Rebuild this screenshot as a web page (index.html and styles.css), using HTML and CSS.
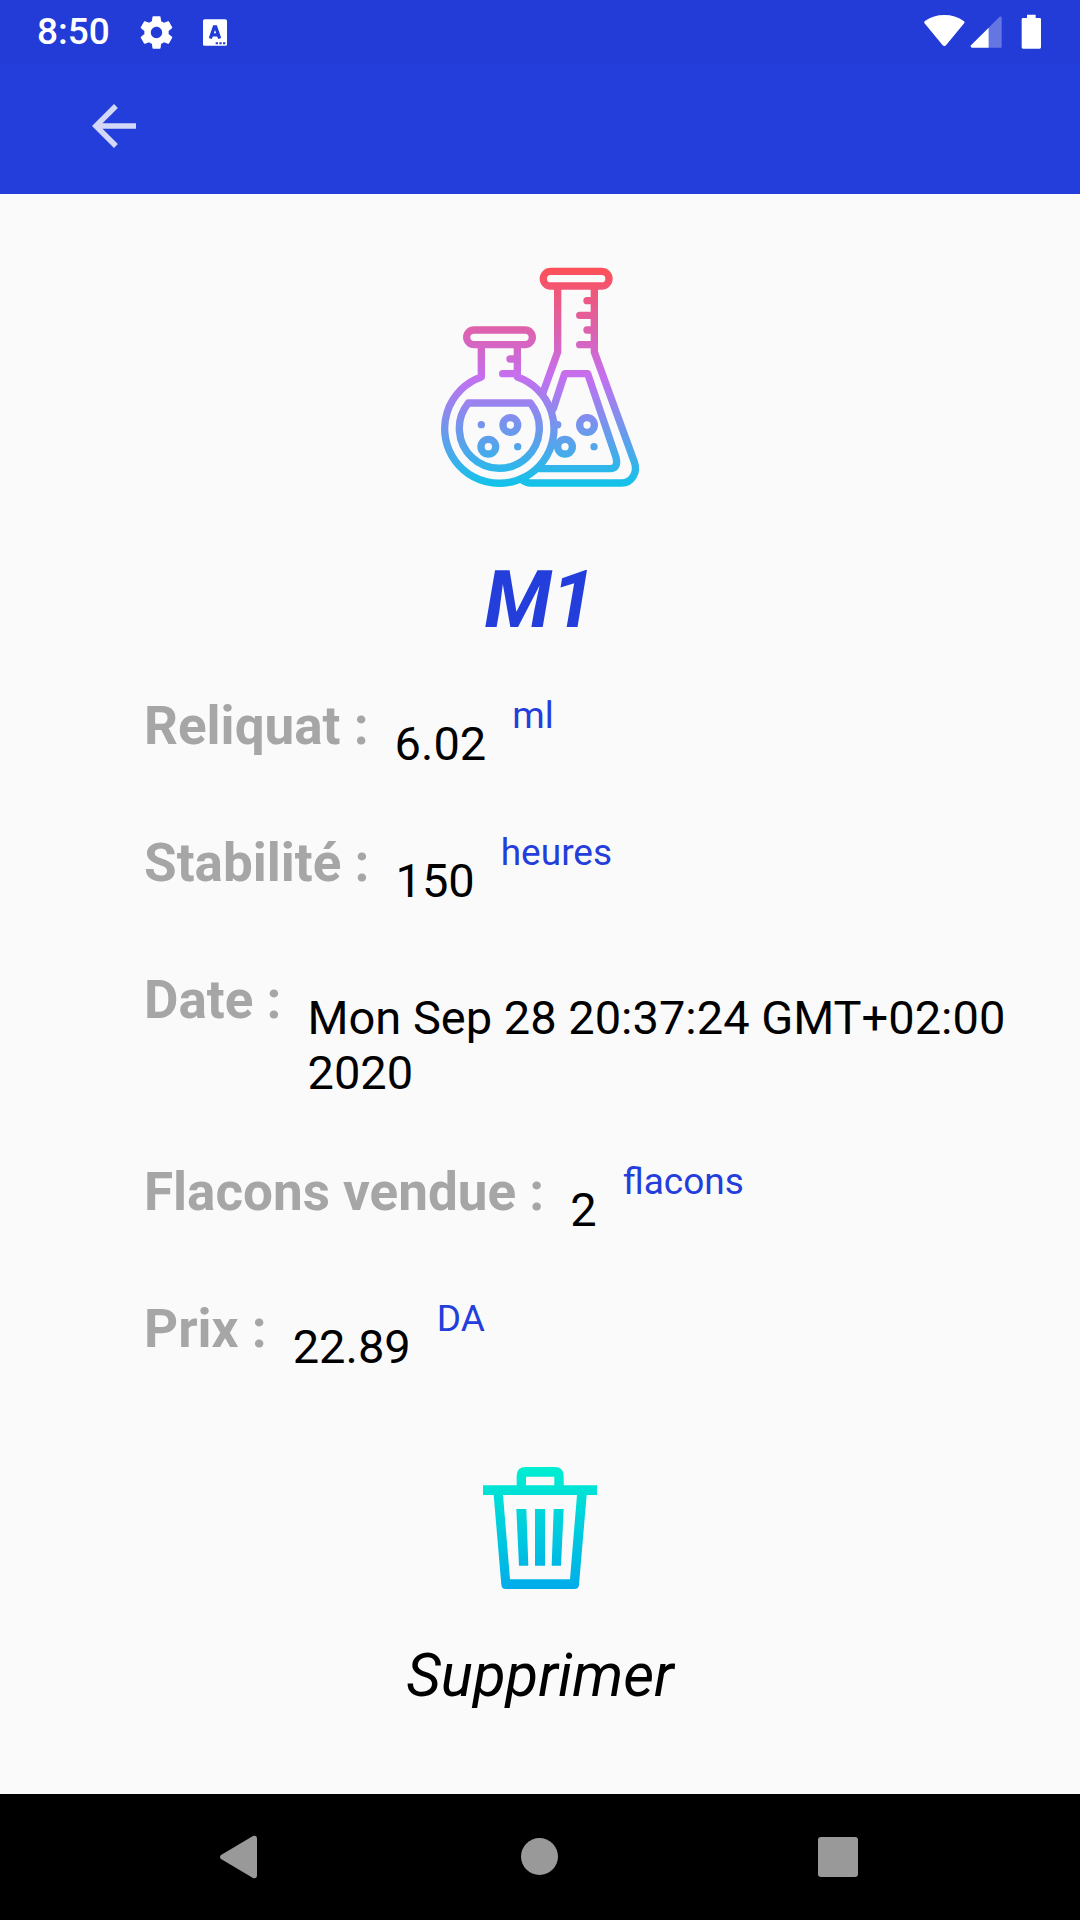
FILE: index.html
```html
<!DOCTYPE html>
<html lang="fr">
<head>
  <meta charset="utf-8">
  <meta name="viewport" content="width=device-width, initial-scale=1">
  <title>M1</title>
  <link rel="stylesheet" href="styles.css">
</head>
<body>
  <div class="status-bar">
    <span class="clock">8:50</span>
    <svg class="status-gear" viewBox="0 0 24 24" aria-hidden="true"><path d="M19.43 12.98c.04-.32.07-.64.07-.98s-.03-.66-.07-.98l2.11-1.65c.19-.15.24-.42.12-.64l-2-3.46c-.12-.22-.39-.3-.61-.22l-2.49 1c-.52-.4-1.08-.73-1.69-.98l-.38-2.65C14.46 2.18 14.25 2 14 2h-4c-.25 0-.46.18-.49.42l-.38 2.65c-.61.25-1.17.59-1.69.98l-2.49-1c-.23-.09-.49 0-.61.22l-2 3.46c-.13.22-.07.49.12.64l2.11 1.65c-.04.32-.07.65-.07.98s.03.66.07.98l-2.11 1.65c-.19.15-.24.42-.12.64l2 3.46c.12.22.39.3.61.22l2.49-1c.52.4 1.08.73 1.69.98l.38 2.65c.03.24.24.42.49.42h4c.25 0 .46-.18.49-.42l.38-2.65c.61-.25 1.17-.59 1.69-.98l2.49 1c.23.09.49 0 .61-.22l2-3.46c.12-.22.07-.49-.12-.64l-2.11-1.65zM12 15.500c-1.930 0-3.500-1.570-3.500-3.500s1.570-3.500 3.500-3.500 3.500 1.570 3.500 3.500-1.570 3.500-3.500 3.500z"/></svg>
    <svg class="status-app" viewBox="0 0 72 80" aria-hidden="true">
      <rect width="72" height="80" rx="5"/>
      <path class="status-app-mark" d="M22 58 L34 23 H38 L50 58 M27 47 H45"/>
      <path class="status-app-dots" d="M38 69h7v6h-7zM49 69h7v6h-7zM60 69h7v6h-7z"/>
    </svg>
    <svg class="status-system" viewBox="0 0 354 108" aria-hidden="true">
      <path d="M1 27 Q-1 23 4 20 Q28 3 61 3 T118 20 Q123 23 121 27 L66 94 Q61 99 56 94 Z"/>
      <path class="signal-empty" d="M194 41 L226 9 Q233 5 233 12 V101 H194 Z"/>
      <path d="M194 41 V101 H143 Q138 98 141 94 Z"/>
      <path d="M309 2 H335 V12 H347 Q351 12 351 16 V100 Q351 104 347 104 H297 Q293 104 293 100 V16 Q293 12 297 12 H309 Z"/>
    </svg>
  </div>

  <header class="app-bar">
    <button class="back" type="button" aria-label="Retour">
      <svg viewBox="0 0 24 24" aria-hidden="true"><path d="M20 11H7.830l5.590-5.590L12 4l-8 8 8 8 1.410-1.410L7.830 13H20z"/></svg>
    </button>
  </header>

  <main class="content">
    <svg class="flasks" viewBox="0 0 720 750" aria-hidden="true">
      <defs>
        <linearGradient id="flask-ink" gradientUnits="userSpaceOnUse" x1="0" y1="53" x2="0" y2="710">
          <stop offset="0" stop-color="#fd5056"/>
          <stop offset="50%" stop-color="#c56ff0"/>
          <stop offset="1" stop-color="#10c4e9"/>
        </linearGradient>
      </defs>
      <g class="flask-lines">
        <rect x="370" y="64" width="197" height="44" rx="22"/>
        <path d="M413 112 V306 L369 428"/>
        <path d="M523 112 V306 L643 636 C655 668 634 699 605 699 H332 Q318 699 304 688"/>
        <path d="M501 152 H523 M479 196 H523 M501 240 H523 M479 284 H523"/>
        <path d="M400 476 L434 371 H503 L588 622 Q596 656 570 656 H360"/>
        <circle cx="501" cy="525" r="22"/>
        <circle cx="435" cy="590" r="22"/>
        <rect x="140" y="240" width="197" height="44" rx="22"/>
        <path d="M184 290 V381 A164 164 0 1 0 292 381 V290"/>
        <path d="M270 327 H292 M248 371 H292"/>
        <path d="M145 459 A120 120 0 1 0 331 459 Z"/>
        <circle cx="271" cy="525" r="22"/>
        <circle cx="205" cy="590" r="22"/>
      </g>
      <g class="flask-dots">
        <circle cx="184" cy="524" r="11"/>
        <circle cx="293" cy="590" r="11"/>
        <circle cx="413" cy="524" r="11"/>
        <circle cx="522" cy="590" r="11"/>
      </g>
    </svg>

    <h1 class="title">M1</h1>

    <dl class="details">
      <div class="row">
        <dt>Reliquat :</dt>
        <dd class="value">6.02</dd>
        <dd class="unit">ml</dd>
      </div>
      <div class="row">
        <dt>Stabilité :</dt>
        <dd class="value">150</dd>
        <dd class="unit">heures</dd>
      </div>
      <div class="row">
        <dt>Date :</dt>
        <dd class="value">Mon Sep 28 20:37:24 GMT+02:00 2020</dd>
      </div>
      <div class="row">
        <dt>Flacons vendue :</dt>
        <dd class="value">2</dd>
        <dd class="unit">flacons</dd>
      </div>
      <div class="row">
        <dt>Prix :</dt>
        <dd class="value">22.89</dd>
        <dd class="unit">DA</dd>
      </div>
    </dl>

    <button class="delete" type="button">
      <svg class="trash" viewBox="0 0 480 450" aria-hidden="true">
        <defs>
          <linearGradient id="trash-ink" gradientUnits="userSpaceOnUse" x1="0" y1="50" x2="0" y2="417">
            <stop offset="0" stop-color="#00efd1"/>
            <stop offset="1" stop-color="#00acea"/>
          </linearGradient>
        </defs>
        <path fill="url(#trash-ink)" fill-rule="evenodd" d="M170 106 V78 Q170 51 197 51 H284 Q311 51 311 78 V106 H411 V135 H380 L357 404 Q356 417 343 417 H137 Q125 417 124 404 L101 135 H69 V106 Z M198 80 V106 H283 V80 Z M129 135 L150 388 H330 L351 135 Z M169 177 H199 L205 347 H177 Z M225 177 H255 V347 H225 Z M281 177 H311 L303 347 H275 Z"/>
      </svg>
      <span>Supprimer</span>
    </button>
  </main>

  <nav class="nav-bar" aria-label="Navigation système">
    <button type="button" aria-label="Précédent">
      <svg viewBox="0 0 64 64" aria-hidden="true"><path d="M13 30 L45 11 Q49 10 49 14 V50 Q49 54 45 53 L13 34 Q11 32 13 30 Z"/></svg>
    </button>
    <button type="button" aria-label="Accueil">
      <svg viewBox="0 0 64 64" aria-hidden="true"><circle cx="31.500" cy="31.500" r="18.500"/></svg>
    </button>
    <button type="button" aria-label="Applications récentes">
      <svg viewBox="0 0 64 64" aria-hidden="true"><rect x="10" y="12" width="40" height="40" rx="3"/></svg>
    </button>
  </nav>
</body>
</html>
```
FILE: styles.css
```css
* {
  box-sizing: border-box;
}

body {
  margin: 0;
  min-height: 100vh;
  display: flex;
  flex-direction: column;
  background: #fafafa;
  color: #000;
  font-family: Roboto, "Liberation Sans", sans-serif;
}

button {
  margin: 0;
  padding: 0;
  border: 0;
  background: none;
  color: inherit;
  font: inherit;
  cursor: pointer;
}

svg {
  display: block;
  flex: none;
}

.status-bar {
  display: flex;
  align-items: center;
  height: 63px;
  padding: 1px 38px 0 37px;
  background: #233cd7;
  color: #fff;
  fill: #fff;
}

.clock {
  font-size: 37px;
  line-height: 44px;
  font-weight: 500;
}

.status-gear {
  width: 39px;
  height: 39px;
  margin-left: 27px;
}

.status-app {
  width: 24px;
  height: 27px;
  margin-left: 27px;
}

.status-app-mark {
  fill: none;
  stroke: #233cd7;
  stroke-width: 10;
}

.status-app-dots {
  fill: #233cd7;
}

.status-system {
  width: 118px;
  height: 36px;
  margin-left: auto;
}

.signal-empty {
  fill-opacity: 0.3;
}

.app-bar {
  height: 131px;
  padding: 30px 81px;
  background: #243edc;
}

.back svg {
  width: 66px;
  height: 66px;
  fill: #d3d8f8;
}

.content {
  flex: 1;
  display: flex;
  flex-direction: column;
  align-items: center;
  padding: 56px 0 80px;
}

.flasks {
  width: 240px;
  height: 250px;
}

.flask-lines {
  fill: none;
  stroke: url(#flask-ink);
  stroke-width: 22;
  stroke-linecap: round;
  stroke-linejoin: round;
}

.flask-dots {
  fill: url(#flask-ink);
}

.title {
  margin: 54px 0 49px;
  color: #243edc;
  font-size: 79px;
  line-height: 92px;
  font-style: italic;
  font-weight: 700;
}

.details {
  display: flex;
  flex-direction: column;
  gap: 61px;
  width: 100%;
  margin: 0;
  padding: 0 53px 0 144px;
}

.row {
  display: flex;
  align-items: flex-start;
  gap: 26px;
}

.row dt {
  color: #a6a6a6;
  font-size: 53px;
  line-height: 62px;
  font-weight: 700;
  white-space: nowrap;
}

.row dd {
  margin: 0;
}

.row .value {
  padding-top: 21px;
  font-size: 47px;
  line-height: 55px;
}

.row .unit {
  color: #243edc;
  font-size: 37px;
  line-height: 41px;
}

.delete {
  display: flex;
  flex-direction: column;
  align-items: center;
  gap: 41px;
  margin-top: 76px;
  font-size: 60px;
  line-height: 70px;
  font-style: italic;
}

.trash {
  width: 160px;
  height: 150px;
}

.nav-bar {
  display: grid;
  grid-template-columns: repeat(3, 1fr);
  height: 126px;
  padding: 0 90px;
  background: #000;
  fill: #999;
}

.nav-bar button {
  display: flex;
  align-items: center;
  justify-content: center;
  fill: inherit;
}

.nav-bar svg {
  width: 64px;
  height: 64px;
}
```
